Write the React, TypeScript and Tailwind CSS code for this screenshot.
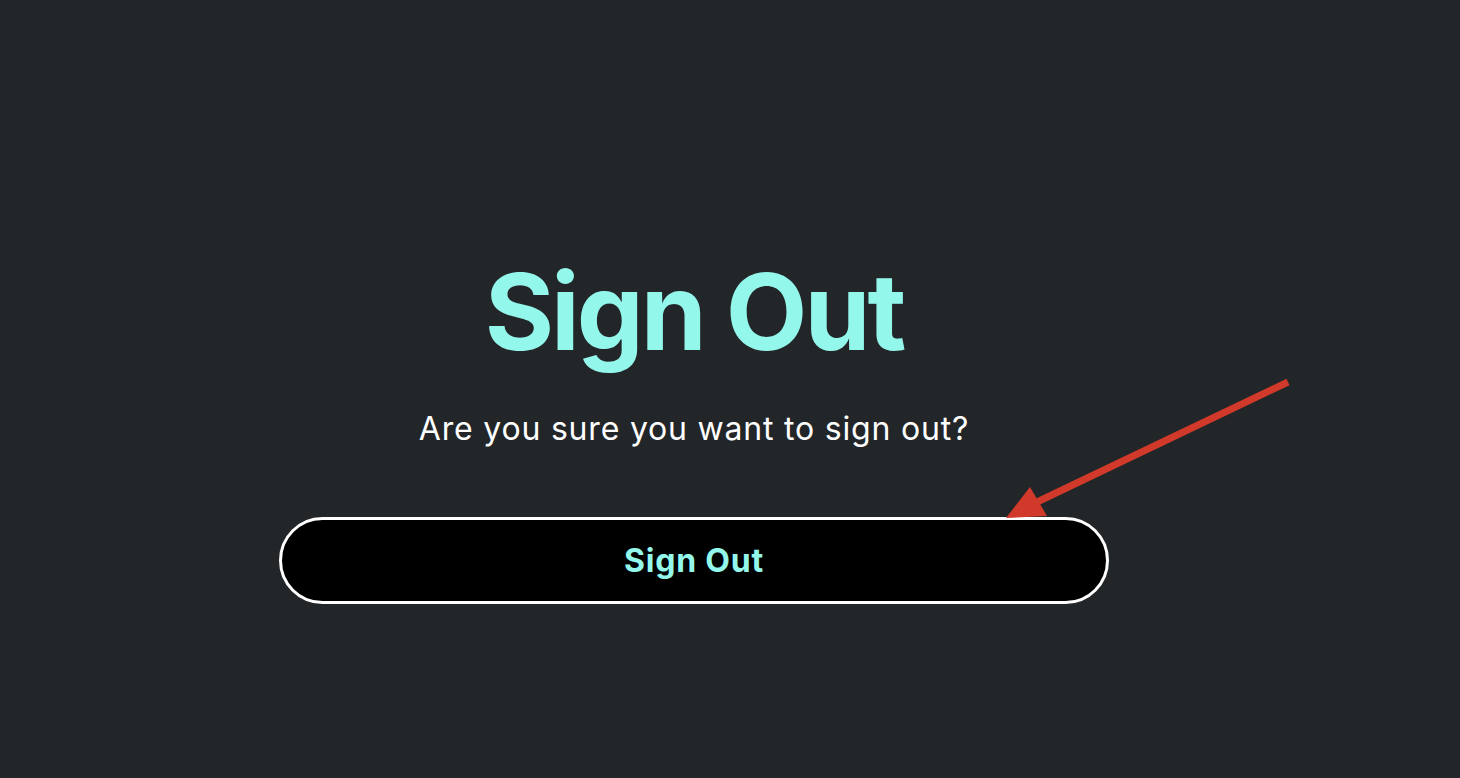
export default function App() {
  return (
    <div className="relative min-h-[778px] w-full bg-[#232629] font-['Inter',sans-serif] overflow-hidden">
      <div className="flex justify-center pr-[72px] pt-[252px]">
        <div className="flex w-[830px] flex-col items-center">
          <h1 className="text-[106px] font-bold leading-[120px] tracking-[-3px] text-[#94f7ec]">Sign Out</h1>
          <p className="mt-[37px] text-[32px] leading-[40px] tracking-[0.8px] text-white">Are you sure you want to sign out?</p>
          <button className="mt-[68px] flex h-[87px] w-[830px] items-center justify-center rounded-full border-[3px] border-white bg-black text-[32px] font-bold tracking-[0.8px] text-[#94f7ec]">
            Sign Out
          </button>
        </div>
      </div>
      <svg className="pointer-events-none absolute left-0 top-0" width="1460" height="778" viewBox="0 0 1460 778">
        <line x1="1288" y1="382" x2="1035" y2="503" stroke="#d13a2a" strokeWidth="7" strokeLinecap="butt" />
        <polygon points="1006,518 1030,487 1047,516" fill="#d13a2a" />
      </svg>
    </div>
  );
}
